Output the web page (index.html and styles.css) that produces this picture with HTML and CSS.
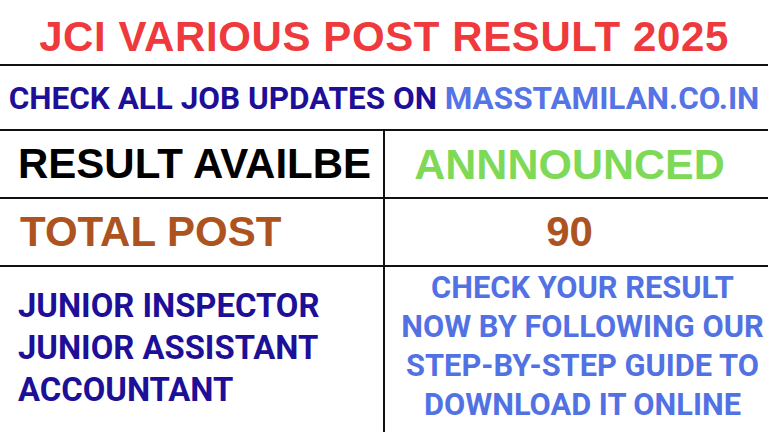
FILE: index.html
```html
<!DOCTYPE html>
<html lang="en">
<head>
<meta charset="utf-8">
<title>JCI Various Post Result 2025</title>
<link rel="stylesheet" href="styles.css">
</head>
<body>
<div class="page">
  <header class="title">JCI VARIOUS POST RESULT 2025</header>
  <div class="rule"></div>
  <div class="updates"><span class="navy">CHECK ALL JOB UPDATES ON </span><span class="blue">MASSTAMILAN.CO.IN</span></div>
  <div class="table">
    <div class="cell left"><span class="big black">RESULT AVAILBE</span></div>
    <div class="cell right"><span class="big green wide">ANNNOUNCED</span></div>
    <div class="cell left"><span class="big brown total">TOTAL POST</span></div>
    <div class="cell right"><span class="big brown">90</span></div>
    <div class="cell left posts">
      <div>JUNIOR INSPECTOR</div>
      <div>JUNIOR ASSISTANT</div>
      <div>ACCOUNTANT</div>
    </div>
    <div class="cell right guide">
      <div>CHECK YOUR RESULT</div>
      <div>NOW BY FOLLOWING OUR</div>
      <div>STEP-BY-STEP GUIDE TO</div>
      <div>DOWNLOAD IT ONLINE</div>
    </div>
  </div>
</div>
</body>
</html>
```
FILE: styles.css
```css
html, body {
  margin: 0;
  padding: 0;
  background: #ffffff;
}
.page {
  width: 768px;
  height: 432px;
  display: flex;
  flex-direction: column;
  overflow: hidden;
  font-family: "Liberation Sans", Arial, sans-serif;
  font-weight: 700;
}
.title {
  height: 64px;
  display: flex;
  align-items: center;
  justify-content: center;
  color: #ee3a3c;
  font-size: 42px;
  letter-spacing: 0.6px;
  padding-top: 10px;
  box-sizing: border-box;
}
.rule {
  height: 2px;
  background: #111;
}
.updates {
  height: 63px;
  display: flex;
  align-items: center;
  justify-content: center;
  font-family: Roboto, "Liberation Sans", sans-serif;
  font-size: 31.5px;
  padding-top: 2px;
  box-sizing: border-box;
  white-space: pre;
}
.navy { color: #1e0f98; }
.blue { color: #5574e6; }
.table {
  flex: 1;
  display: grid;
  grid-template-columns: 383px 1fr;
  grid-template-rows: 66px 66px 1fr;
  gap: 2px;
  padding-top: 2px;
  background: #111;
}
.cell {
  background: #fff;
  display: flex;
  align-items: center;
}
.cell.left {
  padding-left: 18px;
}
.cell.right {
  justify-content: center;
  padding-right: 14px;
}
.big {
  font-size: 42px;
}
.wide { font-size: 43px; }
.total { margin-left: 2px; }
.black { color: #000; }
.green { color: #7ed957; }
.brown { color: #ac531f; }
.posts {
  flex-direction: column;
  align-items: flex-start;
  justify-content: center;
  font-family: Roboto, "Liberation Sans", sans-serif;
  font-size: 32.8px;
  line-height: 42px;
  color: #1e0f98;
  padding-bottom: 4px;
}
.guide {
  flex-direction: column;
  align-items: center;
  font-family: Roboto, "Liberation Sans", sans-serif;
  font-size: 30.8px;
  line-height: 39px;
  color: #5272e4;
  padding-bottom: 8px;
}
.cell.right.guide {
  padding-right: 0;
  padding-left: 12px;
}
```
